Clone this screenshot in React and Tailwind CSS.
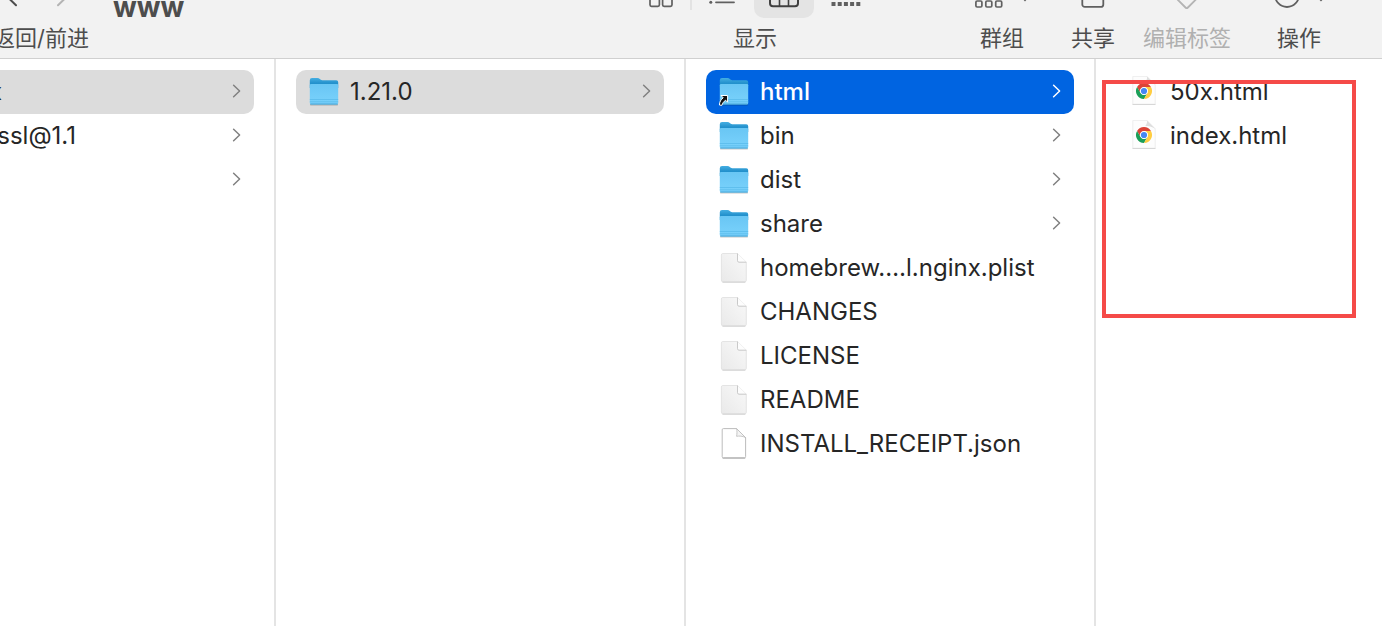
import React, { useState } from "react";

const columns = [
  {
    id: "packages",
    items: [
      { name: "nginx", kind: "folder", state: "path" },
      { name: "openssl@1.1", kind: "folder" },
      { name: "pcre", kind: "folder" },
    ],
  },
  {
    id: "versions",
    items: [{ name: "1.21.0", kind: "folder", state: "path" }],
  },
  {
    id: "contents",
    items: [
      { name: "html", kind: "alias", state: "active" },
      { name: "bin", kind: "folder" },
      { name: "dist", kind: "folder" },
      { name: "share", kind: "folder" },
      { name: "homebrew.…l.nginx.plist", kind: "file" },
      { name: "CHANGES", kind: "file" },
      { name: "LICENSE", kind: "file" },
      { name: "README", kind: "file" },
      { name: "INSTALL_RECEIPT.json", kind: "json" },
    ],
  },
];

const pages = [
  { name: "50x.html", kind: "chrome" },
  { name: "index.html", kind: "chrome" },
];

// Shared gradients, referenced by id from the file icons
const IconDefs = () => (
  <svg className="absolute h-0 w-0" aria-hidden="true">
    <defs>
      <linearGradient id="folderBack" x1="0" y1="0" x2="0" y2="1">
        <stop offset="0" stopColor="#45aee2" />
        <stop offset="0.5" stopColor="#2492cd" />
        <stop offset="1" stopColor="#1786c2" />
      </linearGradient>
      <linearGradient id="folderFront" x1="0" y1="0" x2="0" y2="1">
        <stop offset="0" stopColor="#69c6f4" />
        <stop offset="1" stopColor="#7ad2fc" />
      </linearGradient>
      <linearGradient id="paper" x1="0" y1="1" x2="1" y2="0">
        <stop offset="0" stopColor="#e9e9e9" />
        <stop offset="1" stopColor="#f9f9f9" />
      </linearGradient>
    </defs>
  </svg>
);

const FolderIcon = ({ alias }) => (
  <svg viewBox="0 0 32 32" className="h-8 w-8 shrink-0" aria-hidden="true">
    <rect x="2" y="27" width="28" height="2.6" rx="1.2" fill="#000" opacity="0.22" />
    <path
      d="M1.8 4.2Q1.8 2 4 2H9.5C11.6 2 12 4.2 14.2 4.2H28.2Q30.2 4.2 30.2 6.2V12H1.8Z"
      fill="url(#folderBack)"
    />
    <path
      d="M1.8 9.3Q1.8 8.1 3 8.1H29Q30.2 8.1 30.2 9.3V27Q30.2 28.5 28.7 28.5H3.3Q1.8 28.5 1.8 27Z"
      fill="url(#folderFront)"
    />
    <path d="M1.8 23.5H30.2M1.8 25.8H30.2" stroke="#56b8e8" strokeWidth="0.7" />
    <path d="M2.4 28H29.6" stroke="#3ea2d5" strokeWidth="0.9" />
    {alias && (
      <path
        d="M3 19.5H9.6V26.2L7.6 24.2C5.6 25.6 4.6 27 3.8 29.4L1.4 29C1.6 25.8 2.8 23.6 5.2 21.8Z"
        fill="#111"
        stroke="#fff"
        strokeWidth="1"
      />
    )}
  </svg>
);

const FileIcon = () => (
  <svg viewBox="0 0 32 32" className="h-8 w-8 shrink-0" aria-hidden="true">
    <path
      d="M4.9 1.5H19.5L28.3 10.2V28.2Q28.3 29.8 26.8 29.8H4.9Q3.4 29.8 3.4 28.2V3Q3.4 1.5 4.9 1.5Z"
      fill="url(#paper)"
      stroke="#dedede"
      strokeWidth="0.8"
    />
    <path d="M4.4 30.2H27.4" stroke="#c8c8c8" strokeWidth="0.8" />
    <path d="M19.5 1.5V8.7Q19.5 10.2 21 10.2H28.3Z" fill="#fdfdfd" />
    <path d="M19.5 1.5V8.7Q19.5 10.2 21 10.2H28.3" fill="none" stroke="#bcbcbc" strokeWidth="0.8" />
  </svg>
);

const JsonIcon = () => (
  <svg viewBox="0 0 32 32" className="h-8 w-8 shrink-0" aria-hidden="true">
    <path
      d="M5.4 0.6H18.6L27.6 9.6V28.6Q27.6 29.8 26.4 29.8H5.4Q4.2 29.8 4.2 28.6V1.8Q4.2 0.6 5.4 0.6Z"
      fill="#fff"
      stroke="#b4b4b4"
      strokeWidth="0.9"
    />
    <path d="M4.5 30.2H27.3" stroke="#999" strokeWidth="0.7" />
    <path
      d="M18.6 0.6C19.2 3 19 5.8 18.6 8.3C21.5 7.8 24.5 8 27.6 9.6Z"
      fill="#f4f4f4"
      stroke="#b9b9b9"
      strokeWidth="0.8"
    />
  </svg>
);

const ChromeIcon = () => (
  <svg viewBox="0 0 32 32" className="h-8 w-8 shrink-0" aria-hidden="true">
    <path d="M4.8 0.4H19L27.2 8.8V28.2H4.8Z" fill="#fdfdfd" stroke="#e6e6e6" strokeWidth="0.7" />
    <path d="M4.5 28.5H27.5" stroke="#cfcfcf" strokeWidth="0.8" />
    <path d="M19 0.4C19.4 3 18 5.5 17 6C20 6 24.5 6.5 27.2 8.8Z" fill="#dedede" />
    <g transform="translate(16 15)">
      <path d="M0 -4H6.93A8 8 0 0 0 -6.93 -4L-3.46 2A4 4 0 0 1 0 -4Z" fill="#dc4437" />
      <path d="M-3.46 2L-6.93 -4A8 8 0 0 0 0 8L3.46 2A4 4 0 0 1 -3.46 2Z" fill="#1b9f58" />
      <path d="M3.46 2L0 8A8 8 0 0 0 6.93 -4H0A4 4 0 0 1 3.46 2Z" fill="#ffcd41" />
      <circle r="3.8" fill="#fff" />
      <circle r="3.1" fill="#4587f3" />
    </g>
  </svg>
);

const ItemIcon = ({ kind }) => {
  if (kind === "folder") return <FolderIcon />;
  if (kind === "alias") return <FolderIcon alias />;
  if (kind === "json") return <JsonIcon />;
  if (kind === "chrome") return <ChromeIcon />;
  return <FileIcon />;
};

const Chevron = ({ active }) => (
  <svg viewBox="0 0 10 16" className="h-4 w-2.5 shrink-0" aria-hidden="true">
    <path
      d="M1.6 1.2L7.6 7L1.6 12.8"
      fill="none"
      stroke={active ? "#fff" : "#808080"}
      strokeWidth="1.5"
      strokeLinecap="round"
      strokeLinejoin="round"
    />
  </svg>
);

const Row = ({ item, onSelect }) => {
  const isFolder = item.kind === "folder" || item.kind === "alias";
  const color =
    item.state === "active"
      ? "bg-[#0064e1] text-white font-medium"
      : item.state === "path"
      ? "bg-[#dcdcdc] text-[#262626]"
      : "text-[#262626]";
  return (
    <li>
      <button
        type="button"
        onClick={onSelect}
        className={`flex h-11 w-full items-center gap-2.5 rounded-[10px] pl-3 pr-3 text-left text-2xl ${color}`}
      >
        <ItemIcon kind={item.kind} />
        <span className="grow whitespace-nowrap">{item.name}</span>
        {isFolder && <Chevron active={item.state === "active"} />}
      </button>
    </li>
  );
};

const ToolGroup = ({ label, className = "", children }) => (
  <div className={`flex shrink-0 flex-col items-center ${className}`}>
    <div className="flex h-[18px] items-start">{children}</div>
    <span className="whitespace-nowrap text-[22px] leading-10">{label}</span>
  </div>
);

const Toolbar = () => (
  <header className="flex h-[59px] items-start gap-6 overflow-hidden border-b border-[#d0d0d0] bg-[#f2f2f2] pr-[43px] text-[#4d4d4d]">
    {/* Navigation, running off the left edge */}
    <div className="flex w-[89px] shrink-0 justify-end">
      <div className="flex shrink-0 flex-col items-end">
        <div className="flex h-[18px] items-start gap-6 pr-4">
          <button type="button" aria-label="返回">
            <svg viewBox="0 0 24 18" className="h-[18px] w-6">
              <path d="M7 -2.5L15 5.2" stroke="#4d4d4d" strokeWidth="2" strokeLinecap="round" />
            </svg>
          </button>
          <button type="button" aria-label="前进">
            <svg viewBox="0 0 24 18" className="h-[18px] w-6">
              <path d="M17 -2.5L9 5.2" stroke="#b4b4b4" strokeWidth="2" strokeLinecap="round" />
            </svg>
          </button>
        </div>
        <span className="whitespace-nowrap text-[22px] leading-10">返回/前进</span>
      </div>
    </div>

    <h1 className="grow text-[28px] font-bold leading-3.5">www</h1>

    <ToolGroup label="显示" className="mr-[76px]">
      <div className="flex items-start gap-[17px]">
        <button type="button" aria-label="图标">
          <svg viewBox="0 0 24 18" className="h-[18px] w-6" fill="none" stroke="#606060" strokeWidth="1.7">
            <rect x="1" y="-4" width="9.4" height="10.3" rx="1.5" />
            <rect x="13.6" y="-4" width="9.4" height="10.3" rx="1.5" />
          </svg>
        </button>
        <div className="h-2.5 w-0.5 bg-[#e3e3e3]" />
        <button type="button" aria-label="列表">
          <svg viewBox="0 0 28 18" className="h-[18px] w-7">
            <circle cx="1.8" cy="2.3" r="1.5" fill="#606060" />
            <path d="M7 2.3H25" stroke="#606060" strokeWidth="1.8" strokeLinecap="round" />
          </svg>
        </button>
        <button type="button" aria-label="分栏" className="rounded-b-[10px] bg-[#e4e4e4]">
          <svg viewBox="0 0 60 18" className="h-[18px] w-[60px]" fill="none" stroke="#404040" strokeWidth="2">
            <rect x="16" y="-14" width="28" height="20.2" rx="3" />
            <path d="M25.5 -2V6M34.5 -2V6" strokeWidth="1.6" />
          </svg>
        </button>
        <button type="button" aria-label="画廊">
          <svg viewBox="0 0 30 18" className="h-[18px] w-[30px]" fill="#606060">
            <rect x="0.5" y="2" width="4" height="4" />
            <rect x="6.7" y="2" width="4" height="4" />
            <rect x="12.9" y="2" width="4" height="4" />
            <rect x="19.1" y="2" width="4" height="4" />
            <rect x="25.3" y="2" width="4" height="4" />
          </svg>
        </button>
      </div>
    </ToolGroup>

    <div className="flex shrink-0 items-start gap-7">
      <ToolGroup label="群组" className="px-3.5">
        <button type="button" aria-label="群组">
          <svg viewBox="0 0 54 18" className="h-[18px] w-[54px]" fill="none" stroke="#606060" strokeWidth="1.7">
            <rect x="0.9" y="1" width="6" height="6" rx="1.2" />
            <rect x="10.8" y="1" width="6" height="6" rx="1.2" />
            <rect x="20.7" y="1" width="6" height="6" rx="1.2" />
            <path d="M48 -2L50 0.2L52 -2" />
          </svg>
        </button>
      </ToolGroup>
      <ToolGroup label="共享">
        <button type="button" aria-label="共享">
          <svg viewBox="0 0 24 18" className="h-[18px] w-6" fill="none" stroke="#606060" strokeWidth="1.8">
            <rect x="1.3" y="-12" width="21" height="18.9" rx="2.5" />
          </svg>
        </button>
      </ToolGroup>
      <ToolGroup label="编辑标签" className="text-[#b0b0b0]">
        <button type="button" aria-label="编辑标签" disabled>
          <svg viewBox="0 0 28 18" className="h-[18px] w-7" fill="none" stroke="#b4b4b4" strokeWidth="1.8">
            <path d="M3 -2L12.5 7.5Q13.7 8.7 14.9 7.5L24.4 -2" />
          </svg>
        </button>
      </ToolGroup>
      <ToolGroup label="操作" className="px-3.5">
        <button type="button" aria-label="操作">
          <svg viewBox="0 0 52 18" className="h-[18px] w-[52px]" fill="none" stroke="#606060" strokeWidth="1.8">
            <circle cx="14" cy="-5" r="12" />
            <path d="M46 -2L48 0.2L50 -2" />
          </svg>
        </button>
      </ToolGroup>
    </div>
  </header>
);

const App = () => {
  const [selected, setSelected] = useState("html");

  return (
    <div className="flex min-h-screen flex-col overflow-hidden bg-white font-[Inter,'Noto_Sans_CJK_SC',sans-serif]">
      <IconDefs />
      <Toolbar />
      <main className="flex grow">
        {columns.map((column, index) => (
          <section
            key={column.id}
            className={`flex shrink-0 justify-end overflow-hidden border-r-2 border-[#e4e4e4] ${
              index === 0 ? "w-[276px]" : "w-[410px]"
            }`}
          >
            {/* Every list keeps its full width, the first one is scrolled partly out */}
            <ul className="w-[408px] shrink-0 px-5 pt-[11px]">
              {column.items.map((item) => (
                <Row key={item.name} item={item} onSelect={() => setSelected(item.name)} />
              ))}
            </ul>
          </section>
        ))}
        <section className="relative grow" aria-label={selected}>
          <ul className="px-5 pt-[11px]">
            {pages.map((item) => (
              <Row key={item.name} item={item} onSelect={() => setSelected(item.name)} />
            ))}
          </ul>
          {/* Highlight frame over the served pages */}
          <div className="pointer-events-none absolute left-1.5 top-[21px] h-[238px] w-[254px] border-4 border-[#f54a48]" />
        </section>
      </main>
    </div>
  );
};

export default App;
